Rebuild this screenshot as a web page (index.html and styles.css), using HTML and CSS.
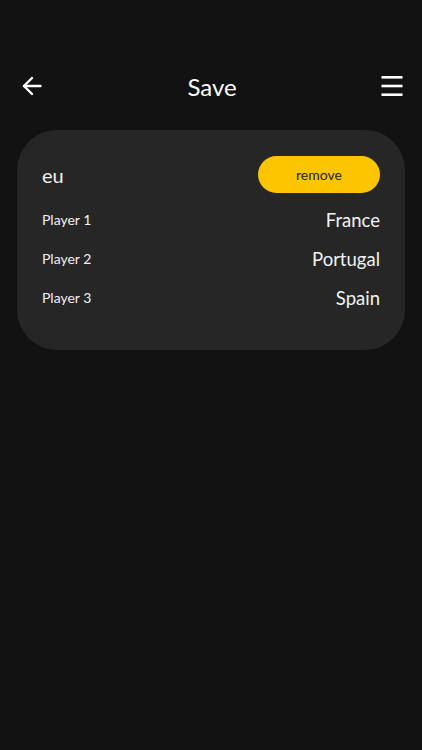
FILE: index.html
```html
<!DOCTYPE html>
<html lang="en">
<head>
    <meta charset="UTF-8">
    <meta name="viewport" content="width=device-width, initial-scale=1.0">
    <title>Save</title>
    <link rel="stylesheet" href="styles.css">
</head>
<body>

<div class="screen">
    <header class="top-bar">
        <button class="icon-btn" aria-label="Back">
            <svg width="20" height="20" viewBox="0 0 20 20" fill="none" stroke="#fff" stroke-width="2.4" stroke-linecap="round" stroke-linejoin="round">
                <path d="M18.5 10H2"/>
                <path d="M10 2L2 10L10 18"/>
            </svg>
        </button>
        <h1>Save</h1>
        <button class="icon-btn" aria-label="Menu">
            <svg width="22" height="22" viewBox="0 0 22 22" fill="#fff">
                <rect x="0.5" y="1" width="21" height="2.6"/>
                <rect x="0.5" y="9.7" width="21" height="2.6"/>
                <rect x="0.5" y="18.4" width="21" height="2.6"/>
            </svg>
        </button>
    </header>

    <div class="card">
        <div class="card-head">
            <span class="group-name">eu</span>
            <button class="remove-btn">remove</button>
        </div>
        <div class="row">
            <span class="player">Player 1</span>
            <span class="country">France</span>
        </div>
        <div class="row">
            <span class="player">Player 2</span>
            <span class="country">Portugal</span>
        </div>
        <div class="row">
            <span class="player">Player 3</span>
            <span class="country">Spain</span>
        </div>
    </div>
</div>

</body>
</html>
```

FILE: styles.css
```css
body {
    margin: 0;
    background-color: #121212;
    color: #ffffff;
    font-family: Lato, "Open Sans", sans-serif;
}

.screen {
    box-sizing: border-box;
    min-height: 750px;
    padding-top: 64px;
}

.top-bar {
    height: 44px;
    display: flex;
    align-items: center;
    justify-content: space-between;
    padding: 0 19px 0 21px;
}

.top-bar h1 {
    margin: 0;
    font-size: 24px;
    font-weight: 400;
    color: #ffffff;
}

.icon-btn {
    background: none;
    border: none;
    padding: 0;
    width: 22px;
    height: 22px;
    display: flex;
    align-items: center;
    justify-content: center;
    cursor: pointer;
}

.card {
    margin: 22px 17px 0 17px;
    background-color: #262626;
    border-radius: 40px;
    padding: 26px 25px 33px 25px;
}

.card-head {
    display: flex;
    align-items: center;
    justify-content: space-between;
    height: 37px;
    margin-bottom: 7px;
}

.group-name {
    font-size: 20px;
    color: #f2f2f2;
}

.remove-btn {
    width: 122px;
    height: 37px;
    border: none;
    border-radius: 19px;
    background-color: #fcc500;
    color: #2a2300;
    font-family: Lato, "Open Sans", sans-serif;
    font-size: 14px;
    cursor: pointer;
}

.row {
    height: 39px;
    display: flex;
    align-items: center;
    justify-content: space-between;
}

.player {
    font-size: 14px;
    color: #f0f0f0;
}

.country {
    font-size: 18.5px;
    color: #f2f2f2;
}
```
